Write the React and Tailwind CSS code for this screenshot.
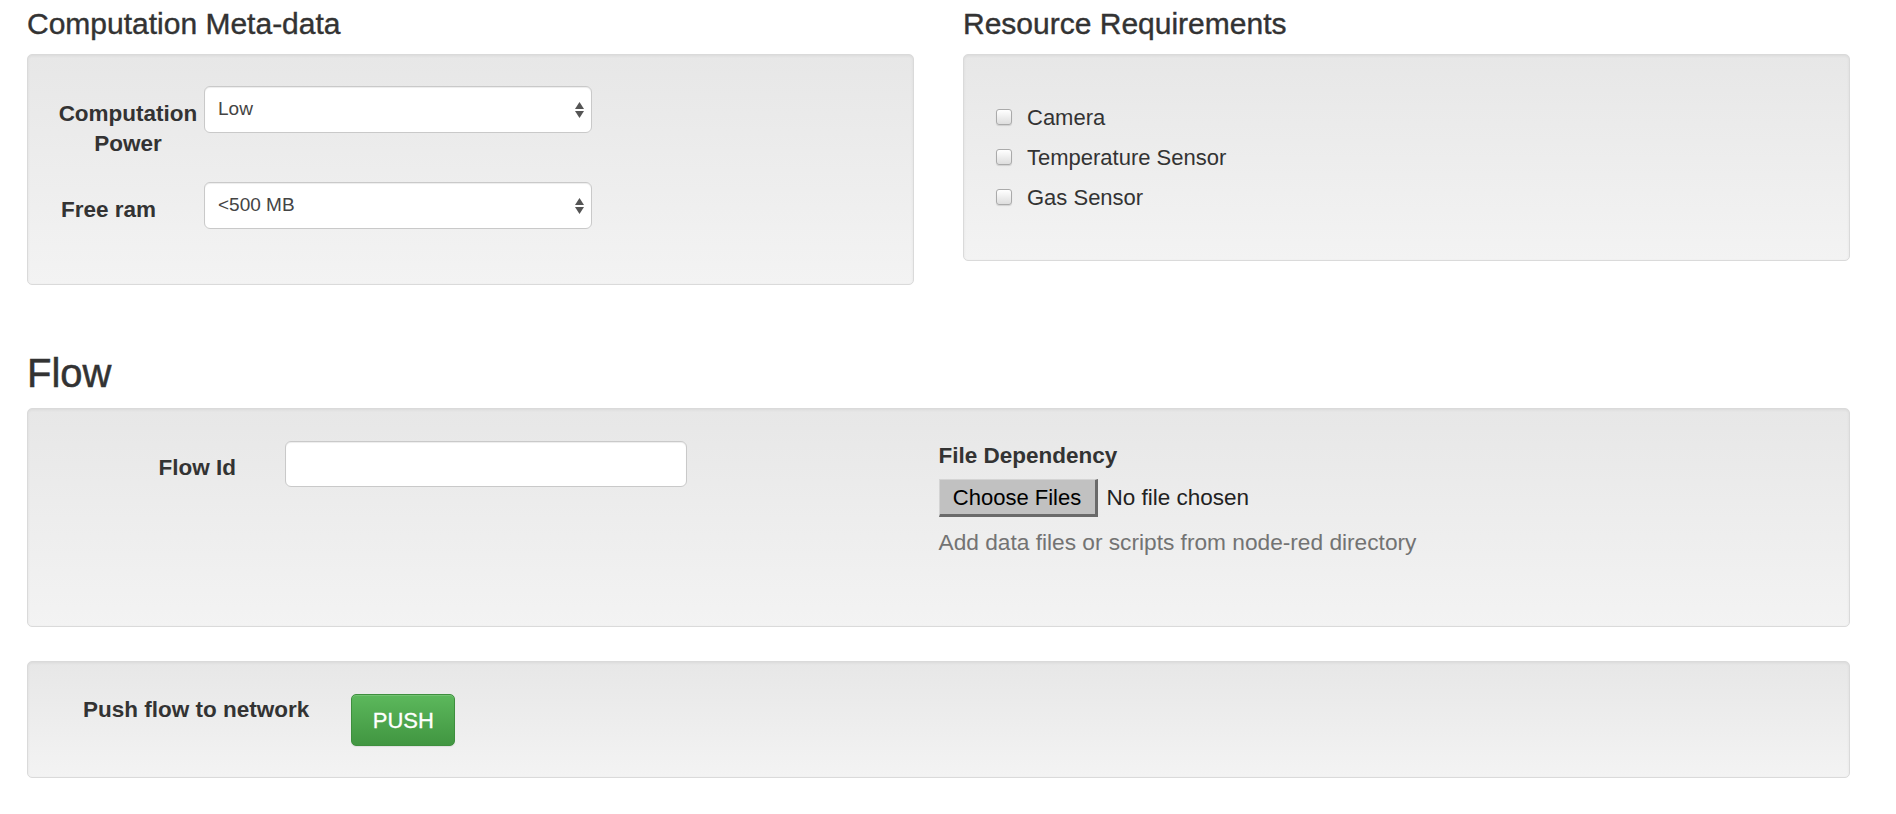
import React from "react";

const Well = ({ className = "", children }) => (
  <div
    className={`rounded-[5px] border border-[#dadada] bg-linear-to-b from-[#e7e7e7] to-[#f3f3f3] shadow-[inset_0_1px_3px_rgba(0,0,0,0.06)] ${className}`}
  >
    {children}
  </div>
);

const Select = ({ value, options }) => (
  <div className="relative w-[388px] shrink-0">
    <select
      defaultValue={value}
      className="block h-[47px] w-full appearance-none rounded-[6px] border border-[#c9c9c9] bg-white pl-[13px] text-[19px] text-[#444] shadow-[inset_0_1px_1px_rgba(0,0,0,0.075)] outline-none"
    >
      {options.map((o) => (
        <option key={o}>{o}</option>
      ))}
    </select>
    <svg
      width="9"
      height="16"
      viewBox="0 0 9 16"
      className="pointer-events-none absolute right-[8px] top-[16px]"
    >
      <path d="M4.5 0 L9 7 H0 Z" fill="#555" />
      <path d="M4.5 16 L9 9 H0 Z" fill="#555" />
    </svg>
  </div>
);

const Check = ({ label }) => (
  <label className="flex h-[40px] items-center pl-[32px]">
    <input
      type="checkbox"
      className="h-[16px] w-[16px] appearance-none rounded-[3px] border border-[#aaa] bg-linear-to-b from-white to-[#dedede] shadow-[0_1px_1px_rgba(0,0,0,0.12)]"
    />
    <span className="ml-[15px] text-[22px]">{label}</span>
  </label>
);

export default function App() {
  return (
    <div className="min-h-screen bg-white pl-[27px] pr-[46px] pt-[7px] font-['Liberation_Sans',Arial,sans-serif] text-[#333]">
      <div className="grid grid-cols-2 items-start gap-x-[49px]">
        <section>
          <h3 className="mb-[14px] text-[30px] leading-[33px] [-webkit-text-stroke:0.4px_#333]">Computation Meta-data</h3>
          <Well className="pb-[55px] pt-[31px]">
            <div className="flex items-start">
              <div className="ml-[30px] w-[140px] pt-[13px] text-center text-[22.5px] font-bold leading-[30px]">
                Computation Power
              </div>
              <div className="ml-[6px]">
                <Select value="Low" options={["Low", "Medium", "High"]} />
              </div>
            </div>
            <div className="mt-[23px] flex items-start">
              <div className="ml-[30px] w-[140px] pl-[3px] pt-[13px] text-[22.5px] font-bold leading-[30px]">
                Free ram
              </div>
              <div className="ml-[6px]">
                <Select value="<500 MB" options={["<500 MB", "500 MB - 1 GB", ">1 GB"]} />
              </div>
            </div>
          </Well>
        </section>

        <section>
          <h3 className="mb-[14px] text-[30px] leading-[33px] [-webkit-text-stroke:0.4px_#333]">Resource Requirements</h3>
          <Well className="pb-[43px] pt-[42px]">
            <Check label="Camera" />
            <Check label="Temperature Sensor" />
            <Check label="Gas Sensor" />
          </Well>
        </section>
      </div>

      <h2 className="mb-[14px] mt-[67px] text-[40px] leading-[42px] [-webkit-text-stroke:0.5px_#333]">Flow</h2>
      <Well className="grid grid-cols-2 pb-[69px] pt-[32px]">
        <div className="flex items-start">
          <label className="w-[208px] pt-[12px] text-right text-[22.5px] font-bold leading-[30px]">Flow Id</label>
          <input
            type="text"
            className="ml-[49px] h-[46px] w-[402px] rounded-[6px] border border-[#c9c9c9] bg-white px-[13px] text-[19px] shadow-[inset_0_1px_1px_rgba(0,0,0,0.075)] outline-none"
          />
        </div>
        <div>
          <div className="text-[22.5px] font-bold leading-[30px]">File Dependency</div>
          <div className="mt-[8px] flex items-center">
            <button className="h-[38px] w-[159px] border-l border-t border-b-[3px] border-r-[3px] border-l-[#d4d4d4] border-t-[#d4d4d4] border-b-[#6a6a6a] border-r-[#6a6a6a] bg-[#c1c1c1] text-[22px] text-black">
              Choose Files
            </button>
            <span className="ml-[9px] text-[22.5px] text-[#222]">No file chosen</span>
          </div>
          <p className="mt-[10px] text-[22.7px] leading-[30px] text-[#737373]">
            Add data files or scripts from node-red directory
          </p>
        </div>
      </Well>

      <Well className="mt-[34px] flex items-start pb-[31px] pt-[32px]">
        <div className="ml-[55px] pt-[1px] text-[22.5px] font-bold leading-[30px]">Push flow to network</div>
        <button className="ml-[42px] h-[52px] w-[104px] rounded-[5px] border border-[#3e8f3e] bg-linear-to-b from-[#5cb85c] to-[#419641] pt-[1px] text-[22px] text-white shadow-[inset_0_1px_0_rgba(255,255,255,0.15),0_1px_1px_rgba(0,0,0,0.075)] [-webkit-text-stroke:0.3px_#fff]">
          PUSH
        </button>
      </Well>
    </div>
  );
}
